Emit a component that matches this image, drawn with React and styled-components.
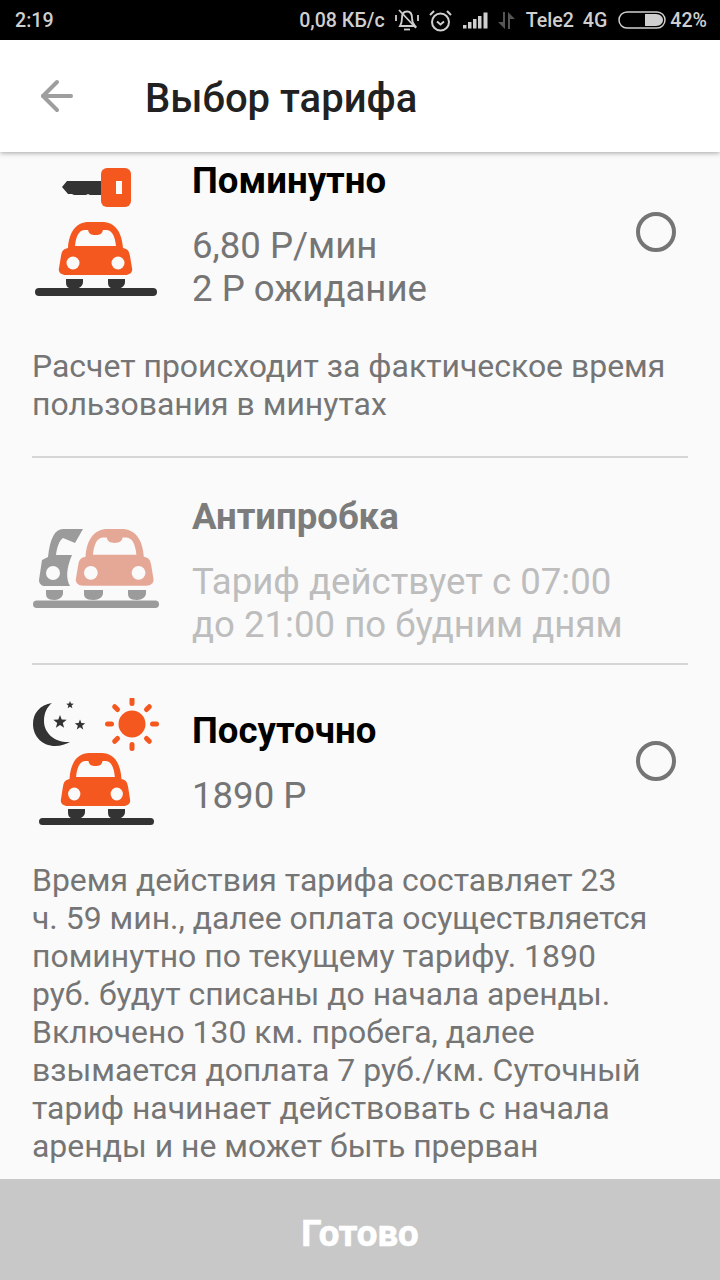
import React from 'react';
import styled, { createGlobalStyle } from 'styled-components';
import { ArrowLeft } from 'lucide-react';

const ORANGE = '#f4581f';
const DARK = '#333333';
const PAGE_BG = '#fafafa';

const GlobalStyle = createGlobalStyle`
  html, body {
    margin: 0;
    padding: 0;
    background: #fafafa;
  }
  * {
    box-sizing: border-box;
  }
`;

const Page = styled.div`
  width: 720px;
  height: 1280px;
  display: flex;
  flex-direction: column;
  overflow: hidden;
  background: ${PAGE_BG};
  font-family: Roboto, "Noto Sans", sans-serif;
`;

const StatusBar = styled.div`
  height: 40px;
  flex: none;
  background: #000;
  color: #cfcfcf;
  display: flex;
  align-items: center;
  padding: 0 13px 0 15px;
  font-size: 19.6px;
  font-weight: 500;
`;

const StatusTime = styled.span`
  margin-right: auto;
`;

const StatusItem = styled.span`
  display: flex;
  align-items: center;
  margin-left: ${(p) => p.$gap || 10}px;
`;

const Header = styled.div`
  height: 112px;
  flex: none;
  background: #fff;
  display: flex;
  align-items: center;
  padding-left: 33px;
  box-shadow: 0 1px 5px rgba(0, 0, 0, 0.35);
  position: relative;
  z-index: 1;
`;

const Title = styled.h1`
  margin: 4px 0 0 64px;
  font-size: 40px;
  font-weight: 500;
  color: #212121;
`;

const Scroll = styled.div`
  flex: 1;
  min-height: 0;
  overflow: hidden;
  padding: 8px 32px 0;
`;

const Plan = styled.div`
  display: flex;
  align-items: flex-start;
`;

const IconCol = styled.div`
  width: 160px;
  flex: none;
  display: flex;
  flex-direction: column;
  align-items: flex-start;
  gap: ${(p) => p.$gap || 0}px;
  padding-top: ${(p) => p.$top || 0}px;
`;

const IconShift = styled.div`
  display: flex;
  margin-left: ${(p) => p.$left}px;
`;

const Info = styled.div`
  flex: 1;
  min-width: 0;
  padding-top: ${(p) => p.$top || 0}px;
`;

const PlanName = styled.div`
  font-size: 36.6px;
  line-height: 42px;
  font-weight: 700;
  margin-bottom: 22px;
  color: ${(p) => (p.$muted ? '#7c7c7c' : '#000')};
`;

const Price = styled.div`
  font-size: 36.6px;
  line-height: 43px;
  white-space: nowrap;
  color: ${(p) => (p.$muted ? '#bdbdbd' : '#757575')};
`;

const Radio = styled.div`
  width: 40px;
  height: 40px;
  flex: none;
  border-radius: 50%;
  border: 4px solid #757575;
  margin-right: 12px;
  margin-top: ${(p) => p.$top}px;
`;

const Desc = styled.p`
  margin: ${(p) => p.$top}px 0 0;
  font-size: 31.95px;
  line-height: 38px;
  color: #757575;
`;

const Divider = styled.div`
  height: 2px;
  background: #d6d6d6;
  margin: ${(p) => p.$top}px 0 ${(p) => p.$bottom}px;
`;

const Footer = styled.div`
  height: 101px;
  flex: none;
  background: #c8c8c8;
  color: #fff;
  display: flex;
  align-items: center;
  justify-content: center;
  padding-top: 8px;
  font-size: 36.5px;
  font-weight: 700;
  -webkit-text-stroke: 0.7px #fff;
`;

const CarShape = ({ color, x = 0, y = 0, sx = 1, sy = 1 }) => (
  <g transform={`translate(${x} ${y}) scale(${sx} ${sy})`}>
    <path
      fill={color}
      fillRule="evenodd"
      d="M9 26 C10 10 17 0 30 0 L43 0 C56 0 63 10 64 26 C69 27 70 29 71 34 L73 46 C74 50 71 53 66 53 L7 53 C2 53 -1 50 0 46 L2 34 C3 29 4 27 9 26 Z M16 24 L57 24 C56 14 53 8 47 8 L44 8 C43 12 41 13 36.5 13 C32 13 30 12 29 8 L26 8 C20 8 17 14 16 24 Z"
    />
    <circle cx="14" cy="41" r="6.5" fill={PAGE_BG} />
    <circle cx="59" cy="41" r="6.5" fill={PAGE_BG} />
  </g>
);

const Wheel = ({ x, y, w = 17, color }) => (
  <path fill={color} d={`M${x} ${y} h${w} v3 c0 4 -4 7 -${w / 2} 7 c-${w / 2 - 1} 0 -${w / 2} -3 -${w / 2} -7 z`} />
);

const CarIcon = () => (
  <svg width="122" height="74" viewBox="0 0 122 74">
    <CarShape color={ORANGE} x={24} />
    <Wheel x={31} y={57} color={DARK} />
    <Wheel x={73} y={57} color={DARK} />
    <rect x="0" y="66" width="122" height="8" rx="4" fill={DARK} />
  </svg>
);

const KeyIcon = () => (
  <svg width="69" height="39" viewBox="0 0 69 39">
    <path fill={DARK} d="M0 19 L5 13 H42 V27 H28 L26 26 L24 27 H12 L10 26 L6 26 Z" />
    <rect x="39" y="0" width="30" height="39" rx="6" fill={ORANGE} />
    <rect x="54" y="13" width="6" height="13" fill={PAGE_BG} />
  </svg>
);

const TrafficIcon = () => (
  <svg width="127" height="79" viewBox="0 0 127 79">
    <path
      fill="#9b9b9b"
      fillRule="evenodd"
      d="M50 0 H30 C22 0 17 9 15 28 L9 31 L6 51 C6 55 9 57 12 57 H37 C33 50 33 40 39 26 H23 C24 18 26 12 30 9 L42 14 Z"
    />
    <circle cx="20" cy="44" r="7" fill={PAGE_BG} />
    <CarShape color="#e6a896" x={43} sx={1.06} sy={1.07} />
    <Wheel x={13} y={61} color="#9b9b9b" />
    <Wheel x={51} y={61} w={19} color="#9b9b9b" />
    <Wheel x={95} y={61} w={18} color="#9b9b9b" />
    <rect x="0" y="71.500" width="126" height="7.500" rx="3.750" fill="#9b9b9b" />
  </svg>
);

const star = (cx, cy, r) => {
  const pts = [];
  for (let i = 0; i < 10; i++) {
    const rad = i % 2 === 0 ? r : r * 0.42;
    const a = (Math.PI / 5) * i - Math.PI / 2;
    pts.push(`${(cx + rad * Math.cos(a)).toFixed(1)},${(cy + rad * Math.sin(a)).toFixed(1)}`);
  }
  return pts.join(' ');
};

const sunRays = [0, 45, 90, 135, 180, 225, 270, 315];

const DayNightIcon = () => (
  <svg width="128" height="55" viewBox="0 0 128 55">
    <path fill={DARK} d="M19 5 C7 7 0 15 0 26 C0 39 10 48 22 48 C28 48 33 46 37 44 C23 45 11 36 11 23 C11 15 14 9 19 5 Z" />
    <polygon fill={DARK} points={star(27, 24, 7)} />
    <polygon fill={DARK} points={star(37, 7, 4)} />
    <polygon fill={DARK} points={star(47, 27, 5.5)} />
    <circle cx="99" cy="26" r="13.500" fill={ORANGE} />
    <g transform="translate(99 26)">
      {sunRays.map((r) => (
        <rect key={r} x="-2.500" y="-27" width="5" height="9" rx="2.500" fill={ORANGE} transform={`rotate(${r})`} />
      ))}
    </g>
  </svg>
);

const SmallCarIcon = () => (
  <svg width="116" height="72" viewBox="0 0 116 72">
    <CarShape color={ORANGE} x={22} sx={0.945} />
    <Wheel x={29} y={56} color={DARK} />
    <Wheel x={69} y={56} color={DARK} />
    <rect x="0" y="65" width="115" height="7" rx="3.500" fill={DARK} />
  </svg>
);

const BellOff = () => (
  <svg width="24" height="24" viewBox="0 0 24 24" fill="none" stroke="#cfcfcf" strokeWidth="1.800">
    <path d="M5 18 C7 15 7 12 7 10 C7 6 9 3.500 12 3.500 C15 3.500 17 6 17 10 C17 13 18 16 20 18 Z" />
    <path d="M9 21.500 H15" />
    <path d="M4 2 L21 20" />
    <path d="M1 7 V13 M23 7 V13" />
  </svg>
);

const AlarmClock = () => (
  <svg width="23" height="23" viewBox="0 0 23 23" fill="none" stroke="#cfcfcf" strokeWidth="2">
    <circle cx="11.500" cy="13" r="8.500" />
    <path d="M8 12.500 L11.500 15.500 L15 12.500" />
    <path d="M1 6 L5 2 M22 6 L18 2" />
  </svg>
);

const Signal = () => (
  <svg width="25" height="17" viewBox="0 0 25 17" fill="#cfcfcf">
    <rect x="0" y="13" width="3.500" height="3.500" />
    <rect x="5" y="10" width="3.500" height="6.500" />
    <rect x="10" y="7" width="3.500" height="9.500" />
    <rect x="15" y="4" width="3.500" height="12.500" />
    <rect x="20.500" y="0.500" width="4" height="16" />
  </svg>
);

const DataArrows = () => (
  <svg width="17" height="17" viewBox="0 0 17 17" fill="#555">
    <path d="M7 0 V17 L0 10 H5 V0 Z" />
    <path d="M10 17 V0 L17 7 H12 V17 Z" />
  </svg>
);

const Battery = () => (
  <svg width="48" height="18" viewBox="0 0 48 18">
    <rect x="1" y="1" width="46" height="16" rx="8" fill="none" stroke="#cfcfcf" strokeWidth="1.500" />
    <path d="M27 3 H38 C42 3 45 6 45 9 C45 12 42 15 38 15 H27 Z" fill="#cfcfcf" />
  </svg>
);

export default function App() {
  return (
    <Page>
      <GlobalStyle />
      <StatusBar>
        <StatusTime>2:19</StatusTime>
        <StatusItem>0,08 КБ/с</StatusItem>
        <StatusItem $gap={10}><BellOff /></StatusItem>
        <StatusItem $gap={10}><AlarmClock /></StatusItem>
        <StatusItem $gap={11}><Signal /></StatusItem>
        <StatusItem $gap={10}><DataArrows /></StatusItem>
        <StatusItem $gap={11}>Tele2</StatusItem>
        <StatusItem $gap={9}>4G</StatusItem>
        <StatusItem $gap={11}><Battery /></StatusItem>
        <StatusItem $gap={4}>42%</StatusItem>
      </StatusBar>

      <Header>
        <ArrowLeft size={48} color="#9e9e9e" strokeWidth={2} />
        <Title>Выбор тарифа</Title>
      </Header>

      <Scroll>
        <Plan>
          <IconCol $top={8} $gap={15}>
            <IconShift $left={30}><KeyIcon /></IconShift>
            <IconShift $left={3}><CarIcon /></IconShift>
          </IconCol>
          <Info>
            <PlanName>Поминутно</PlanName>
            <Price>6,80 Р/мин</Price>
            <Price>2 Р ожидание</Price>
          </Info>
          <Radio $top={52} />
        </Plan>
        <Desc $top={37}>Расчет происходит за фактическое время пользования в минутах</Desc>
        <Divider $top={33} $bottom={38} />

        <Plan>
          <IconCol $top={33}>
            <IconShift $left={1}><TrafficIcon /></IconShift>
          </IconCol>
          <Info>
            <PlanName $muted>Антипробка</PlanName>
            <Price $muted>Тариф действует с 07:00</Price>
            <Price $muted>до 21:00 по будним дням</Price>
          </Info>
        </Plan>
        <Divider $top={17} $bottom={33} />

        <Plan>
          <IconCol>
            <IconShift $left={1}><DayNightIcon /></IconShift>
            <IconShift $left={7}><SmallCarIcon /></IconShift>
          </IconCol>
          <Info $top={12}>
            <PlanName>Посуточно</PlanName>
            <Price>1890 Р</Price>
          </Info>
          <Radio $top={43} />
        </Plan>
        <Desc $top={36}>
          Время действия тарифа составляет 23<br />
          ч. 59 мин., далее оплата осуществляется поминутно по текущему тарифу. 1890<br />
          руб. будут списаны до начала аренды. Включено 130 км. пробега, далее взымается доплата 7 руб./км. Суточный тариф начинает действовать с начала аренды и не может быть прерван
        </Desc>
      </Scroll>

      <Footer>Готово</Footer>
    </Page>
  );
}
